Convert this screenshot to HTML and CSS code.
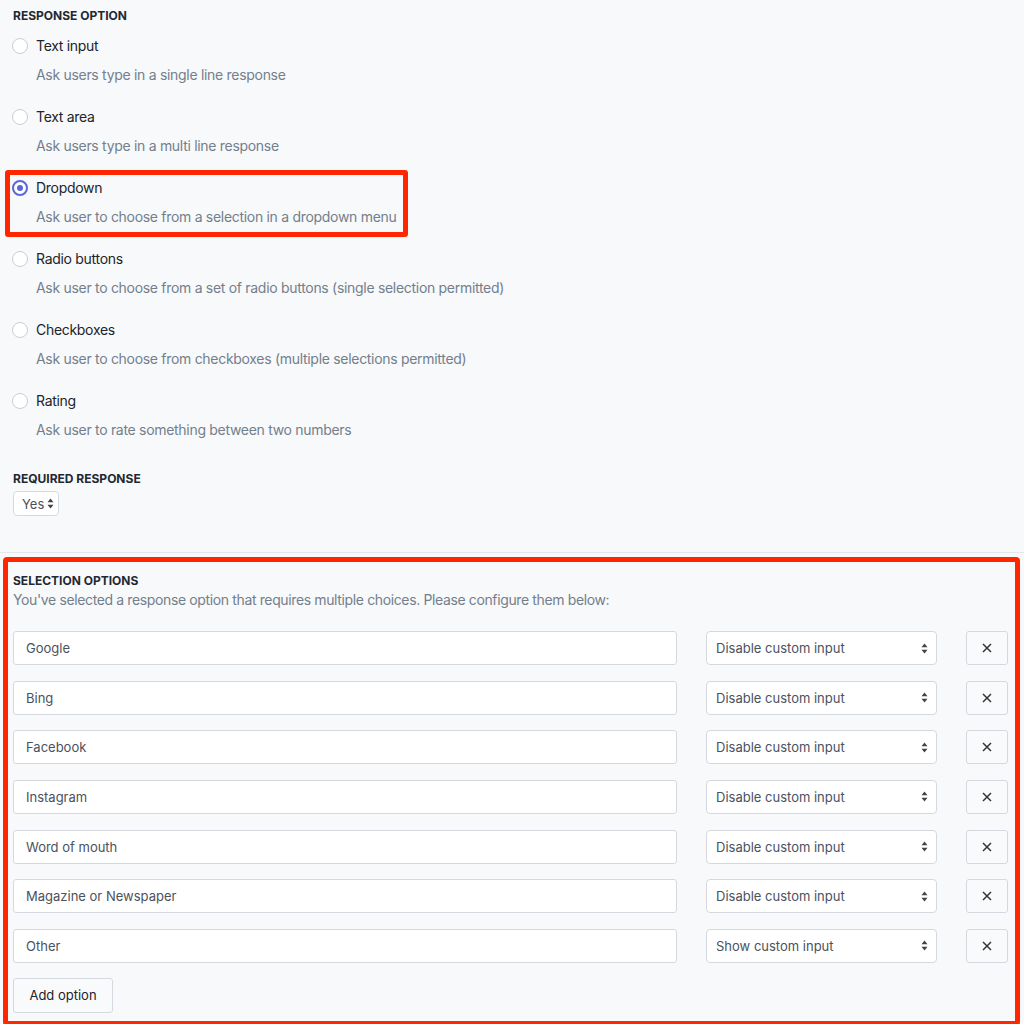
FILE: index.html
```html
<!DOCTYPE html>
<html lang="en">
<head>
    <meta charset="UTF-8">
    <meta name="viewport" content="width=device-width, initial-scale=1.0">
    <title>Question settings</title>
    <link rel="stylesheet" href="styles.css">
</head>
<body>
    <!-- Type de réponse -->
    <section class="response-section">
        <h3 class="field-title">Response option</h3>
        <div class="option-list">
            <label class="option">
                <span class="option-head"><span class="radio"></span>Text input</span>
                <span class="option-desc">Ask users type in a single line response</span>
            </label>
            <label class="option">
                <span class="option-head"><span class="radio"></span>Text area</span>
                <span class="option-desc">Ask users type in a multi line response</span>
            </label>
            <label class="option highlight">
                <span class="option-head"><span class="radio checked"></span>Dropdown</span>
                <span class="option-desc">Ask user to choose from a selection in a dropdown menu</span>
            </label>
            <label class="option">
                <span class="option-head"><span class="radio"></span>Radio buttons</span>
                <span class="option-desc">Ask user to choose from a set of radio buttons (single selection permitted)</span>
            </label>
            <label class="option">
                <span class="option-head"><span class="radio"></span>Checkboxes</span>
                <span class="option-desc">Ask user to choose from checkboxes (multiple selections permitted)</span>
            </label>
            <label class="option">
                <span class="option-head"><span class="radio"></span>Rating</span>
                <span class="option-desc">Ask user to rate something between two numbers</span>
            </label>
        </div>

        <h3 class="field-title required-title">Required response</h3>
        <div class="select-box small">
            <span>Yes</span>
            <svg class="arrows" width="7" height="11" viewBox="0 0 7 11"><path d="M3.5 0.5 L6.5 4.3 L0.5 4.3 Z M3.5 10.5 L6.5 6.7 L0.5 6.7 Z" fill="#444"/></svg>
        </div>
    </section>

    <!-- Choix multiples -->
    <section class="selection-section">
        <h3 class="field-title">Selection options</h3>
        <p class="section-desc">You've selected a response option that requires multiple choices. Please configure them below:</p>

        <div class="choices">
            <div class="choice-row">
                <div class="text-field">Google</div>
                <div class="select-box"><span>Disable custom input</span><svg class="arrows" width="7" height="11" viewBox="0 0 7 11"><path d="M3.5 0.5 L6.5 4.3 L0.5 4.3 Z M3.5 10.5 L6.5 6.7 L0.5 6.7 Z" fill="#444"/></svg></div>
                <button class="remove-btn"><svg width="10" height="10" viewBox="0 0 10 10"><path d="M1 1 L9 9 M9 1 L1 9" stroke="#333" stroke-width="1.5" fill="none"/></svg></button>
            </div>
            <div class="choice-row">
                <div class="text-field">Bing</div>
                <div class="select-box"><span>Disable custom input</span><svg class="arrows" width="7" height="11" viewBox="0 0 7 11"><path d="M3.5 0.5 L6.5 4.3 L0.5 4.3 Z M3.5 10.5 L6.5 6.7 L0.5 6.7 Z" fill="#444"/></svg></div>
                <button class="remove-btn"><svg width="10" height="10" viewBox="0 0 10 10"><path d="M1 1 L9 9 M9 1 L1 9" stroke="#333" stroke-width="1.5" fill="none"/></svg></button>
            </div>
            <div class="choice-row">
                <div class="text-field">Facebook</div>
                <div class="select-box"><span>Disable custom input</span><svg class="arrows" width="7" height="11" viewBox="0 0 7 11"><path d="M3.5 0.5 L6.5 4.3 L0.5 4.3 Z M3.5 10.5 L6.5 6.7 L0.5 6.7 Z" fill="#444"/></svg></div>
                <button class="remove-btn"><svg width="10" height="10" viewBox="0 0 10 10"><path d="M1 1 L9 9 M9 1 L1 9" stroke="#333" stroke-width="1.5" fill="none"/></svg></button>
            </div>
            <div class="choice-row">
                <div class="text-field">Instagram</div>
                <div class="select-box"><span>Disable custom input</span><svg class="arrows" width="7" height="11" viewBox="0 0 7 11"><path d="M3.5 0.5 L6.5 4.3 L0.5 4.3 Z M3.5 10.5 L6.5 6.7 L0.5 6.7 Z" fill="#444"/></svg></div>
                <button class="remove-btn"><svg width="10" height="10" viewBox="0 0 10 10"><path d="M1 1 L9 9 M9 1 L1 9" stroke="#333" stroke-width="1.5" fill="none"/></svg></button>
            </div>
            <div class="choice-row">
                <div class="text-field">Word of mouth</div>
                <div class="select-box"><span>Disable custom input</span><svg class="arrows" width="7" height="11" viewBox="0 0 7 11"><path d="M3.5 0.5 L6.5 4.3 L0.5 4.3 Z M3.5 10.5 L6.5 6.7 L0.5 6.7 Z" fill="#444"/></svg></div>
                <button class="remove-btn"><svg width="10" height="10" viewBox="0 0 10 10"><path d="M1 1 L9 9 M9 1 L1 9" stroke="#333" stroke-width="1.5" fill="none"/></svg></button>
            </div>
            <div class="choice-row">
                <div class="text-field">Magazine or Newspaper</div>
                <div class="select-box"><span>Disable custom input</span><svg class="arrows" width="7" height="11" viewBox="0 0 7 11"><path d="M3.5 0.5 L6.5 4.3 L0.5 4.3 Z M3.5 10.5 L6.5 6.7 L0.5 6.7 Z" fill="#444"/></svg></div>
                <button class="remove-btn"><svg width="10" height="10" viewBox="0 0 10 10"><path d="M1 1 L9 9 M9 1 L1 9" stroke="#333" stroke-width="1.5" fill="none"/></svg></button>
            </div>
            <div class="choice-row">
                <div class="text-field">Other</div>
                <div class="select-box"><span>Show custom input</span><svg class="arrows" width="7" height="11" viewBox="0 0 7 11"><path d="M3.5 0.5 L6.5 4.3 L0.5 4.3 Z M3.5 10.5 L6.5 6.7 L0.5 6.7 Z" fill="#444"/></svg></div>
                <button class="remove-btn"><svg width="10" height="10" viewBox="0 0 10 10"><path d="M1 1 L9 9 M9 1 L1 9" stroke="#333" stroke-width="1.5" fill="none"/></svg></button>
            </div>
        </div>

        <button class="add-btn">Add option</button>
    </section>
</body>
</html>
```

FILE: styles.css
```css
/* Général */
html, body {
    margin: 0;
    padding: 0;
    background: #f8f9fb;
    font-family: 'Inter', 'Noto Sans', sans-serif;
    font-size: 14px;
    letter-spacing: -0.3px;
    color: #212529;
}

.field-title {
    margin: 0;
    font-size: 12px;
    line-height: 16px;
    font-weight: 700;
    letter-spacing: 0;
    text-transform: uppercase;
    color: #1f2933;
}

/* Section type de réponse */
.response-section {
    padding: 8px 13px 36px 13px;
    border-bottom: 1px solid #e4e7eb;
}

.option-list {
    display: flex;
    flex-direction: column;
    gap: 22px;
    margin-top: 12px;
}

.option {
    display: flex;
    flex-direction: column;
    gap: 9px;
    position: relative;
}

.option-head {
    display: flex;
    align-items: center;
    gap: 8px;
    line-height: 20px;
    margin-left: -1px;
}

.option-desc {
    padding-left: 23px;
    line-height: 20px;
    color: #737f8c;
}

.radio {
    width: 14px;
    height: 14px;
    border: 1px solid #c9ced6;
    border-radius: 50%;
    background: #fff;
    box-sizing: content-box;
    position: relative;
}

.radio.checked {
    border: 2px solid #5a67d8;
    width: 12px;
    height: 12px;
}

.radio.checked::after {
    content: '';
    position: absolute;
    top: 3px;
    left: 3px;
    width: 6px;
    height: 6px;
    border-radius: 50%;
    background: #5a67d8;
}

/* Cadre d'annotation */
.option.highlight::after {
    content: '';
    position: absolute;
    top: -8px;
    left: -8px;
    width: 403px;
    height: 67px;
    box-sizing: border-box;
    border: 5px solid #ff2600;
    border-radius: 3px;
    pointer-events: none;
}

.required-title {
    margin-top: 31px;
}

/* Sélecteurs */
.select-box {
    display: flex;
    align-items: center;
    justify-content: space-between;
    box-sizing: border-box;
    height: 34px;
    padding: 0 8px 0 9px;
    background: #fff;
    border: 1px solid #d5d9df;
    border-radius: 4px;
    font-size: 13px;
    letter-spacing: 0;
    color: #4a5260;
}

.select-box.small {
    display: inline-flex;
    margin-top: 4px;
    height: 25px;
    width: 46px;
    padding: 0 4px 0 8px;
}

.arrows {
    flex-shrink: 0;
}

/* Section options de sélection */
.selection-section {
    position: relative;
    padding: 20px 16px 15px 13px;
}

.selection-section::after {
    content: '';
    position: absolute;
    top: 4px;
    left: 3px;
    right: 4px;
    bottom: 2px;
    border: 5px solid #ff2600;
    border-radius: 4px;
    pointer-events: none;
}

.section-desc {
    margin: 1px 0 0 0;
    line-height: 20px;
    letter-spacing: -0.37px;
    color: #737f8c;
}

.choices {
    display: flex;
    flex-direction: column;
    gap: 15.67px;
    margin-top: 21px;
}

.choice-row {
    display: grid;
    grid-template-columns: 1fr 231px 42px;
    column-gap: 29px;
}

.text-field {
    box-sizing: border-box;
    height: 34px;
    display: flex;
    align-items: center;
    padding: 0 12px;
    background: #fff;
    border: 1px solid #d5d9df;
    border-radius: 3px;
    font-size: 13px;
    letter-spacing: 0;
    color: #4a5260;
}

.remove-btn {
    height: 34px;
    width: 42px;
    padding: 0;
    display: flex;
    align-items: center;
    justify-content: center;
    background: #f9fafb;
    border: 1px solid #d5d9df;
    border-radius: 3px;
    cursor: pointer;
}

.add-btn {
    margin-top: 15px;
    height: 35px;
    width: 100px;
    padding: 0;
    font-family: inherit;
    font-size: 13px;
    letter-spacing: 0;
    color: #212529;
    background: #f9fafb;
    border: 1px solid #d5d9df;
    border-radius: 3px;
    cursor: pointer;
}
```
